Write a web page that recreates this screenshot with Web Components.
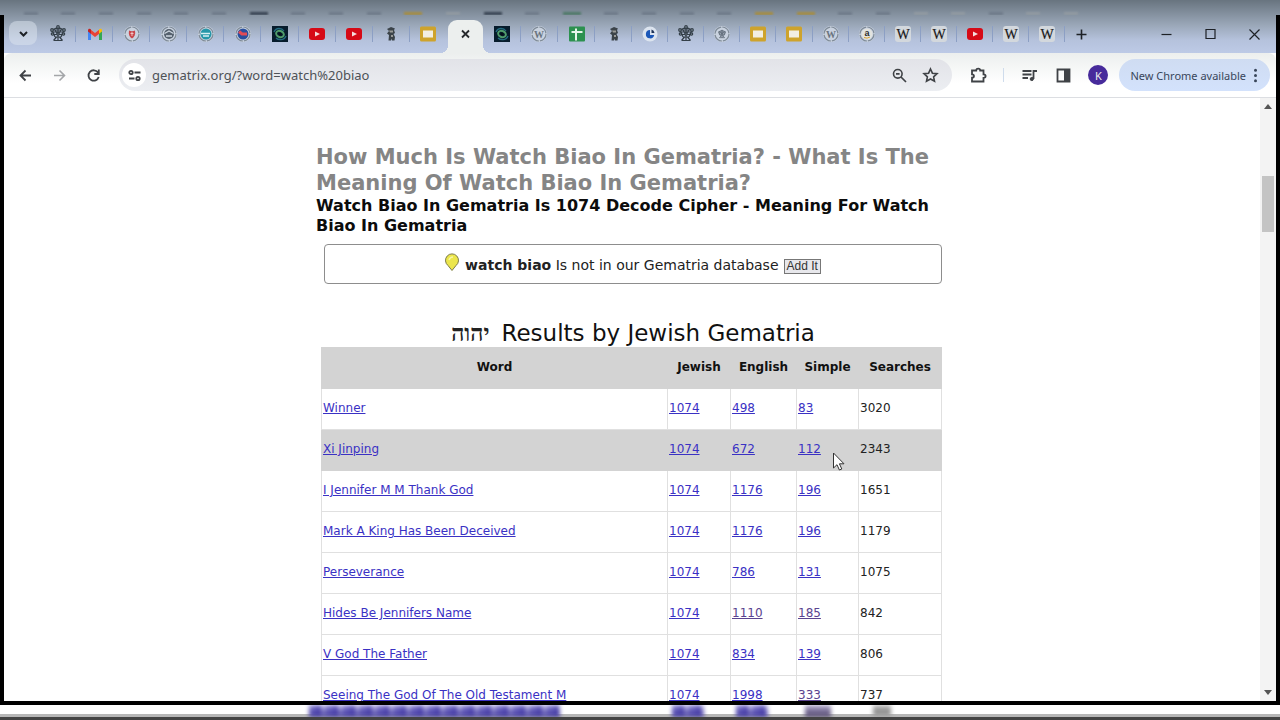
<!DOCTYPE html>
<html lang="en">
<head>
<meta charset="utf-8">
<title>Gematria Calculator</title>
<style>
  html, body { margin: 0; height: 100%; overflow: hidden; }
  body { font-family: "DejaVu Sans", Verdana, sans-serif; background: #fff; }
</style>
</head>
<body>
<app-desktop></app-desktop>
<script>
const define = (name, html, setup) => {
  const tpl = document.createElement('template');
  tpl.innerHTML = html;
  customElements.define(name, class extends HTMLElement {
    connectedCallback() {
      if (this.shadowRoot) return;
      const root = this.attachShadow({ mode: 'open' });
      root.append(tpl.content.cloneNode(true));
      if (setup) setup(this, root);
    }
  });
};

const ring = (inner) => `<circle cx="9" cy="9" r="8" fill="#c9d2df"/><circle cx="9" cy="9" r="7" fill="none" stroke="#7f8b98" stroke-width="1.200" stroke-dasharray="10 1"/>${inner}`;
const treeShape = '<path d="M9 2.2L3 5h12zM2.500 7h13M3.500 9.500h11M6 12h6M4.500 15.500h9M3 5l3 7M15 5l-3 7M6 5l3 4.500L12 5M9 1.500v14M7.500 12l-3 3.500M10.500 12l3 3.500"/>';
const glyphs = {
  tree: `<g fill="none" stroke="#343f48" stroke-width="1.200">${treeShape}<g fill="#8f9dac"><circle cx="9" cy="2" r="1.300"/><circle cx="3" cy="5" r="1.300"/><circle cx="15" cy="5" r="1.300"/><circle cx="3.500" cy="9" r="1.200"/><circle cx="14.500" cy="9" r="1.200"/><circle cx="9" cy="9" r="1.200"/></g></g>`,
  gmail: '<path fill="#4285f4" d="M2 15V5l3 2v8z"/><path fill="#34a853" d="M13 15V7l3-2v10z"/><path fill="#ea4335" d="M4.500 4.500L9 8l4.500-3.500v4L9 12 4.500 8.500z"/><path fill="#c5221f" d="M2 5.500C2 3.500 4 3.500 5 4.500v4.200L2 6.500z"/><path fill="#fbbc04" d="M16 5.500c0-2-2-2-3-1v4.200l3-2.200z"/>',
  red: ring('<path fill="#c9474b" d="M6 5.500c2 1 4 1 6 0 .8 4-.6 6.500-3 8-2.400-1.500-3.800-4-3-8z"/><path stroke="#f0c5c4" d="M9 7v4M7.500 8.500h3"/>'),
  ball: ring('<circle cx="9" cy="9" r="5" fill="#55616e"/><path d="M4.500 8.500L9 6l4.500 2.500M6 11h6" stroke="#cdd6df" fill="none" stroke-width="1.300"/>'),
  teal: ring('<circle cx="9" cy="9" r="5.500" fill="#2697a8"/><path d="M4 8.500h9M6 11h6" stroke="#d8f0f2" stroke-width="1.500"/>'),
  blue: ring('<circle cx="9" cy="9" r="5.500" fill="#284f9e"/><path d="M5 6.500l3 2.500h5" stroke="#e24b55" stroke-width="3" fill="none"/>'),
  space: '<path fill="#071c2c" d="M1 1h16v16H1z"/><g fill="none"><ellipse cx="9" cy="9" rx="4" ry="3" stroke="#4f9d6b" stroke-width="2" transform="rotate(25 9 9)"/><path d="M3 7c2-5 8-4 10-1M15 11c-2 5-8 4-10 2" stroke="#246d80" stroke-width="1.300"/></g><circle cx="9" cy="9" r="1.500" fill="#061018"/>',
  youtube: '<rect x="1" y="3" width="16" height="12" rx="3" fill="#d60a16"/><path fill="#f4dddd" d="M7 6.500l5 2.500-5 2.500z"/>',
  figure: '<path fill="#3b4349" d="M5 4l4-2 4 1.500-1 1.500 1 3-1.500 1 1.500 3-.5 3.500H10l-.500-2-.500 2H6.500L7 10 5 8.500 7 6z"/><path fill="#9a9b98" d="M7 5.500h4v2H8zM9 10h2v2H9z"/>',
  slides: '<rect x="1" y="1.500" width="16" height="15" rx="1.500" fill="#cea32c"/><path fill="#f2eee2" d="M4 5.500h10v7H4z"/>',
  wordpress: ring('<text x="9" y="12.500" text-anchor="middle" font-family="Liberation Serif" font-size="10" font-weight="700" fill="#697480">W</text>'),
  sheets: '<rect x="1" y="1.500" width="16" height="15" rx="1" fill="#2c9150"/><path d="M8 3.500v12M3.500 7h11" stroke="#e7f5eb" stroke-width="2"/>',
  site: '<circle cx="9" cy="9" r="7.500" fill="#dce4ef"/><path fill="#1b57b8" d="M9 5a4.200 4.200 0 1 0 4.200 5H9z"/><path fill="#1d3258" d="M10.500 4.500a4 4 0 0 1 3 3.500h-3z"/>',
  ringtree: ring(`<g transform="translate(4 4) scale(.56)" fill="none" stroke="#5c6874" stroke-width="1.400">${treeShape}</g>`),
  amazon: ring('<circle cx="9" cy="9" r="5.500" fill="#e2e3df"/><text x="9" y="11" text-anchor="middle" font-family="Liberation Sans" font-size="9" font-weight="700" fill="#2c2d2d">a</text><path d="M6 12.500q3 1.500 6-.500" fill="none" stroke="#d8a335"/>'),
  wiki: '<rect x="1" y="1" width="16" height="16" rx="3" fill="#d3d8dd"/><text x="9" y="13.500" text-anchor="middle" font-family="Liberation Serif" font-size="14" fill="#191919" stroke="#191919" stroke-width=".2">W</text>',
};
const chrome = {
  down: '<path d="M6 8l3.500 3.500L13 8" stroke-width="2"/>',
  close: '<path d="M6 5.500l7 7M13 5.500l-7 7" stroke-width="1.800"/>',
  plus: '<path d="M9.500 4.500v10M4.500 9.500h10" stroke-width="1.600"/>',
  min: '<path d="M4.500 9.500h10" stroke-width="1.200"/>',
  max: '<path d="M5 4.500h9v9H5z" stroke-width="1.200"/>',
  winclose: '<path d="M4.500 4.500l10 10M14.500 4.500l-10 10" stroke-width="1.200"/>',
  back: '<path d="M15 9.500H4.500M9.500 4.500l-5 5 5 5" stroke-width="1.800"/>',
  forward: '<path d="M4 9.500h10.500M9.500 4.500l5 5-5 5" stroke-width="1.600"/>',
  reload: '<path d="M14 6.500A5.200 5.200 0 1 0 14.700 11M14.800 3.500V8h-4.500" stroke-width="1.800"/>',
  tune: '<g stroke-width="1.800"><circle cx="6" cy="6.500" r="1.700"/><path d="M9.500 6.500h6M4 12.500h5.500"/><circle cx="13" cy="12.500" r="1.700"/></g>',
  zoomout: '<circle cx="7.800" cy="7.800" r="4.300" stroke-width="1.600"/><path d="M11 11l5 5M6 7.800h3.600" stroke-width="1.700"/>',
  star: '<path d="M9.500 3l1.900 4.200 4.600.5-3.400 3.100.9 4.500-4-2.300-4 2.300.9-4.500L3 7.700l4.600-.5z" stroke-width="1.600"/>',
  puzzle: '<path d="M3 4.500h4.200c0-2.600 4-2.600 4 0H14.500v3.800c2.800 0 2.800 3.600 0 3.600v3.600H3v-3.800c2.600 0 2.600-3.400 0-3.400z" stroke-width="1.800"/>',
  media: '<path d="M2.500 5h9M2.500 8.500h9M2.500 12h5.500M13.500 13V5H17" stroke-width="1.800"/><circle cx="11.800" cy="13" r="1.600" fill="currentColor"/>',
  panel: '<path d="M3.500 3.500h12v12h-12z" stroke-width="1.800"/><path d="M10.500 4h5v11h-5z" fill="currentColor"/>',
  dots: '<g fill="currentColor" stroke="none"><circle cx="9.500" cy="4.200" r="1.500"/><circle cx="9.500" cy="9.500" r="1.500"/><circle cx="9.500" cy="14.800" r="1.500"/></g>',
};

define('chrome-icon', `<style>:host{display:block;width:19px;height:19px}svg{display:block;width:100%;height:100%}</style>`, (el, root) => {
  root.innerHTML += `<svg viewBox="0 0 19 19" fill="none" stroke="currentColor" aria-hidden="true">${chrome[el.getAttribute('name')]}</svg>`;
});

define('browser-tab', `<style>
  :host{display:grid;place-items:center;position:relative;min-width:0;height:38px;color:#26292c}
  svg{display:block;width:18px;height:18px}
  :host([divider])::after{content:"";position:absolute;right:0;top:11px;width:1px;height:16px;background:#8c9fc4}
  :host([active]){background:#ecefee;border-radius:9px 9px 0 0;margin:5px 1px 0;height:33px;padding-bottom:5px;box-sizing:border-box}
  :host([active])::before,:host([active])::after{content:"";position:absolute;bottom:0;width:8px;height:8px}
  :host([active])::before{right:100%;background:radial-gradient(circle at 0 0,transparent 8px,#ecefee 8px)}
  :host([active])::after{left:100%;background:radial-gradient(circle at 100% 0,transparent 8px,#ecefee 8px)}
  button{all:unset;display:block}
</style>`, (el, root) => {
  const box = document.createElement('div');
  box.innerHTML = el.hasAttribute('active')
    ? '<button aria-label="Close tab"><chrome-icon name="close"></chrome-icon></button>'
    : `<svg viewBox="0 0 18 18" aria-hidden="true">${glyphs[el.getAttribute('icon')]}</svg>`;
  root.append(box);
});

define('tab-strip', `<style>
  :host{display:flex;height:38px;color:#1d2126}
  button{all:unset;box-sizing:border-box;display:grid;place-items:center}
  .search{width:28px;height:24px;margin:6px 0 0 5px;border-radius:8px;background:rgba(222,230,240,.5)}
  .tabs{flex:1;min-width:0;display:grid;grid-template-columns:repeat(16,minmax(0,37fr)) repeat(12,minmax(0,36fr));margin-left:2px}
  .new{width:32px;height:38px}
  .controls{display:grid;grid-template-columns:repeat(3,44px);margin-left:47px}
</style>
<button class="search" aria-label="Search tabs"><chrome-icon name="down"></chrome-icon></button>
<div class="tabs"></div>
<button class="new" aria-label="New tab"><chrome-icon name="plus"></chrome-icon></button>
<div class="controls">
  <button aria-label="Minimize"><chrome-icon name="min"></chrome-icon></button>
  <button aria-label="Maximize"><chrome-icon name="max"></chrome-icon></button>
  <button aria-label="Close"><chrome-icon name="winclose"></chrome-icon></button>
</div>`, (el, root) => {
  const icons = 'tree gmail red ball teal blue space youtube youtube figure slides active space wordpress sheets figure site tree ringtree slides slides wordpress amazon wiki wiki youtube wiki wiki'.split(' ');
  root.querySelector('.tabs').innerHTML = icons.map((n, i) => n === 'active'
    ? '<browser-tab active></browser-tab>'
    : `<browser-tab icon="${n}" ${icons[i + 1] === 'active' ? '' : 'divider'}></browser-tab>`).join('');
});

define('tool-bar', `<style>
  :host{display:flex;align-items:center;box-sizing:border-box;height:45px;padding:0 6px 0 4px;background:linear-gradient(#ecefee,#fff 30px);border-bottom:1px solid #dcdee2;border-radius:8px 8px 0 0;color:#3f4246;font-family:"Noto Sans","Open Sans",sans-serif}
  button{all:unset;display:grid;place-items:center;width:34px;height:34px}
  .dim{color:#a4a6a9}
  .address{flex:1;min-width:0;display:flex;align-items:center;height:32px;margin-left:9px;border-radius:16px;background:linear-gradient(#e2e3e8,#eceef2);box-sizing:border-box;padding:0 6px 0 3px}
  .address .site{width:24px;height:24px;border-radius:12px;background:#fff}
  .address button{width:31px}
  input{flex:1;min-width:0;border:0;outline:0;padding:0;margin-left:6px;background:none;font:13px "Noto Sans","Open Sans",sans-serif;color:#4e5257}
  .sep{width:1px;height:14px;margin:0 8px;background:#cfdcec}
  .avatar{width:20px;height:20px;border-radius:10px;background:#472b9b;color:#eee;font-size:11px;margin:0 11px 0 8px}
  .ext{margin-left:9px}
  .update{display:flex;width:auto;height:32px;border-radius:16px;background:linear-gradient(#cfdcf2,#d3e2fc);padding:0 5px 0 11px;font-size:11px;color:#39465a;white-space:nowrap}
</style>
<button aria-label="Back"><chrome-icon name="back"></chrome-icon></button>
<button class="dim" aria-label="Forward"><chrome-icon name="forward"></chrome-icon></button>
<button aria-label="Reload"><chrome-icon name="reload"></chrome-icon></button>
<div class="address">
  <button class="site" aria-label="Site information"><chrome-icon name="tune"></chrome-icon></button>
  <input aria-label="Address" value="gematrix.org/?word=watch%20biao" spellcheck="false">
  <button aria-label="Zoom"><chrome-icon name="zoomout"></chrome-icon></button>
  <button aria-label="Bookmark"><chrome-icon name="star"></chrome-icon></button>
</div>
<button class="ext" aria-label="Extensions"><chrome-icon name="puzzle"></chrome-icon></button>
<span class="sep"></span>
<button aria-label="Media"><chrome-icon name="media"></chrome-icon></button>
<button aria-label="Side panel"><chrome-icon name="panel"></chrome-icon></button>
<button class="avatar">K</button>
<button class="update"><span>New Chrome available</span><chrome-icon name="dots"></chrome-icon></button>`);

define('database-notice', `<style>
  :host{display:flex;justify-content:center;align-items:center;gap:5px;height:38px;margin:8px 0 0 8px;border:1px solid #8d8d8d;border-radius:4px;font-size:14px;color:#222;white-space:nowrap;padding-right:1px}
  svg{width:16px;height:20px;align-self:flex-start;margin-top:8px}
  span{margin-top:2px}
  button{margin-top:5px;border:1px solid #777;background:#e8e8ec;padding:0 2px;font:12px/13px "Liberation Sans",sans-serif;color:#333}
</style>
<svg viewBox="0 0 16 20" aria-hidden="true"><path d="M8 17.500L4 12.500A6.500 6.500 0 1 1 12 12.500z" fill="#ece64c" stroke="#7c7b49"/><path d="M5 7q1-3 4-3" fill="none" stroke="#f7f6a8" stroke-width="1.500"/></svg>
<span><b><slot name="phrase"></slot></b> <slot></slot></span>
<button>Add It</button>`);

define('gematria-table', `<style>
  :host{display:block;margin-left:5px}
  table{width:100%;border-collapse:collapse;table-layout:fixed;font-size:12px;line-height:14px;color:#222}
  th,td{box-sizing:border-box;height:41px;padding:0 1px 2px;border:1px solid #e0e0e0;text-align:left}
  th{text-align:center;color:#111}
  thead tr,tr.hit{background:#d3d3d3}
  thead th,tr.hit td{border-color:#d3d3d3}
  a{color:#3a31c4}
  a.seen{color:#5a4390}
</style>
<table>
  <colgroup><col><col style="width:63px"><col style="width:66px"><col style="width:62px"><col style="width:83px"></colgroup>
  <thead><tr><th>Word</th><th>Jewish</th><th>English</th><th>Simple</th><th>Searches</th></tr></thead>
  <tbody></tbody>
</table>`, (el, root) => {
  const rows = [
    ['Winner', 1074, 498, 83, 3020], ['Xi Jinping', 1074, 672, 112, 2343],
    ['I Jennifer M M Thank God', 1074, 1176, 196, 1651], ['Mark A King Has Been Deceived', 1074, 1176, 196, 1179],
    ['Perseverance', 1074, 786, 131, 1075], ['Hides Be Jennifers Name', 1074, 1110, 185, 842],
    ['V God The Father', 1074, 834, 139, 806], ['Seeing The God Of The Old Testament M', 1074, 1998, 333, 737]];
  const seen = new Set([1110, 185, 333]);
  root.querySelector('tbody').innerHTML = rows.map((r, i) => `<tr class="${i === 1 ? 'hit' : ''}">` + r.map((v, c) =>
    c === 4 ? `<td>${v}</td>` : `<td><a href="#" class="${seen.has(v) ? 'seen' : ''}">${v}</a></td>`).join('') + '</tr>').join('');
});

define('result-page', `<style>
  :host{display:block;overflow:hidden;background:#fff;padding-right:6px}
  main{max-width:626px;margin:46px auto 0}
  h1{margin:0;font-size:21px;line-height:26px;color:#858585}
  h2{margin:0;font-size:16px;line-height:20px;color:#0c0c0c}
  h3{display:flex;justify-content:center;align-items:center;gap:12px;margin:36px 0 0;padding-left:8px;font-size:23px;line-height:27px;font-weight:400;color:#111}
  h3 span{font:700 23px/20px "Liberation Serif",serif;color:#222}
</style>
<main>
  <h1>How Much Is Watch Biao In Gematria? - What Is The Meaning Of Watch Biao In Gematria?</h1>
  <h2>Watch Biao In Gematria Is 1074 Decode Cipher - Meaning For Watch Biao In Gematria</h2>
  <database-notice><span slot="phrase">watch biao</span>Is not in our Gematria database</database-notice>
  <h3><span lang="he">יהוה</span>Results by Jewish Gematria</h3>
  <gematria-table></gematria-table>
</main>`);

define('page-scrollbar', `<style>
  :host{display:flex;flex-direction:column;width:16px;background:#f3f3f3;color:#555}
  i{flex:none;display:grid;place-items:center;height:17px}
  i::after{content:"";border:4px solid transparent;border-bottom:5px solid #555;border-top:0}
  i.down::after{border-top:5px solid #555;border-bottom:0}
  .track{flex:1;display:grid;grid-template-rows:11fr 10fr 81fr;padding:0 2px}
  .thumb{grid-row:2;background:#c4c4c4}
</style><i></i><div class="track"><div class="thumb"></div></div><i class="down"></i>`);

define('browser-window', `<style>
  :host{display:flex;flex-direction:column;flex:1;min-height:0;border:solid #000;border-width:0 4px 4px}
  .view{flex:1;min-height:0;display:grid;grid-template-columns:minmax(0,1fr) 16px;background:#fff}
</style>
<tab-strip></tab-strip><tool-bar></tool-bar>
<div class="view"><result-page></result-page><page-scrollbar></page-scrollbar></div>`);

define('app-desktop', `<style>
  :host{display:flex;flex-direction:column;height:100vh;position:relative;overflow:hidden;background:linear-gradient(#68747f,#9aa7b8 25px,#b5c2dc 40px,#bdcae6 53px,#fff 53px)}
  .above{height:15px;flex:none;overflow:hidden;display:flex;align-items:flex-end;justify-content:space-around;padding:0 190px 0 12px}
  .above i{width:14px;height:3px;background:#6d7988;filter:blur(1px)}
  .above i.dark{width:18px;background:#35404f}.above i.gold{width:18px;background:#a78d3e}.above i.green{width:18px;background:#4c7865}.above i.pale{background:#919aa1}
  .below{flex:none;height:12px;overflow:hidden;display:grid;grid-template-columns:minmax(0,31fr) 251px 112px 32px 32px 32px 37px 26px 42px 18px minmax(0,39fr);background:linear-gradient(#fff 9px,#b7b7b7 9px)}
  .below i{filter:blur(2px);background:linear-gradient(#aaa4e400,#241a8fcc),repeating-linear-gradient(90deg,#8a83d2 0 7px,#6a61bf 7px 12px,#c4c0ea 12px 17px)}
  .below i:nth-child(1){grid-column:2}
  .below i:nth-child(2){grid-column:4}
  .below i:nth-child(3){grid-column:6}
  .below i:nth-child(4){grid-column:8;background:linear-gradient(#b5acd0,#453a63)}
  .below i:nth-child(5){grid-column:10;background:linear-gradient(#b8b8b8,#8a8a8a 8px,#b7b7b7)}
  .floor{flex:none;height:3px;background:#444}
  .cursor{position:absolute;left:832px;top:452px;width:13px;height:20px}
</style>
<div class="above"></div>
<browser-window></browser-window>
<div class="below"><i></i><i></i><i></i><i></i><i></i></div>
<div class="floor"></div>
<svg class="cursor" viewBox="0 0 13 20" aria-hidden="true"><path d="M1.500 1v15l3.500-3.300 2.400 5.300 2.400-1-2.400-5.200H12z" fill="#fff" stroke="#333"/></svg>`, (el, root) => {
  const kinds = ['', '', '', '', '', '', 'dark', '', '', '', 'gold', 'pale', 'dark', '', 'green', '', '', '', '', 'gold', 'gold', '', '', 'pale', 'pale', '', 'pale', 'pale'];
  root.querySelector('.above').innerHTML = kinds.map(k => `<i class="${k}"></i>`).join('');
});
</script>
</body>
</html>
